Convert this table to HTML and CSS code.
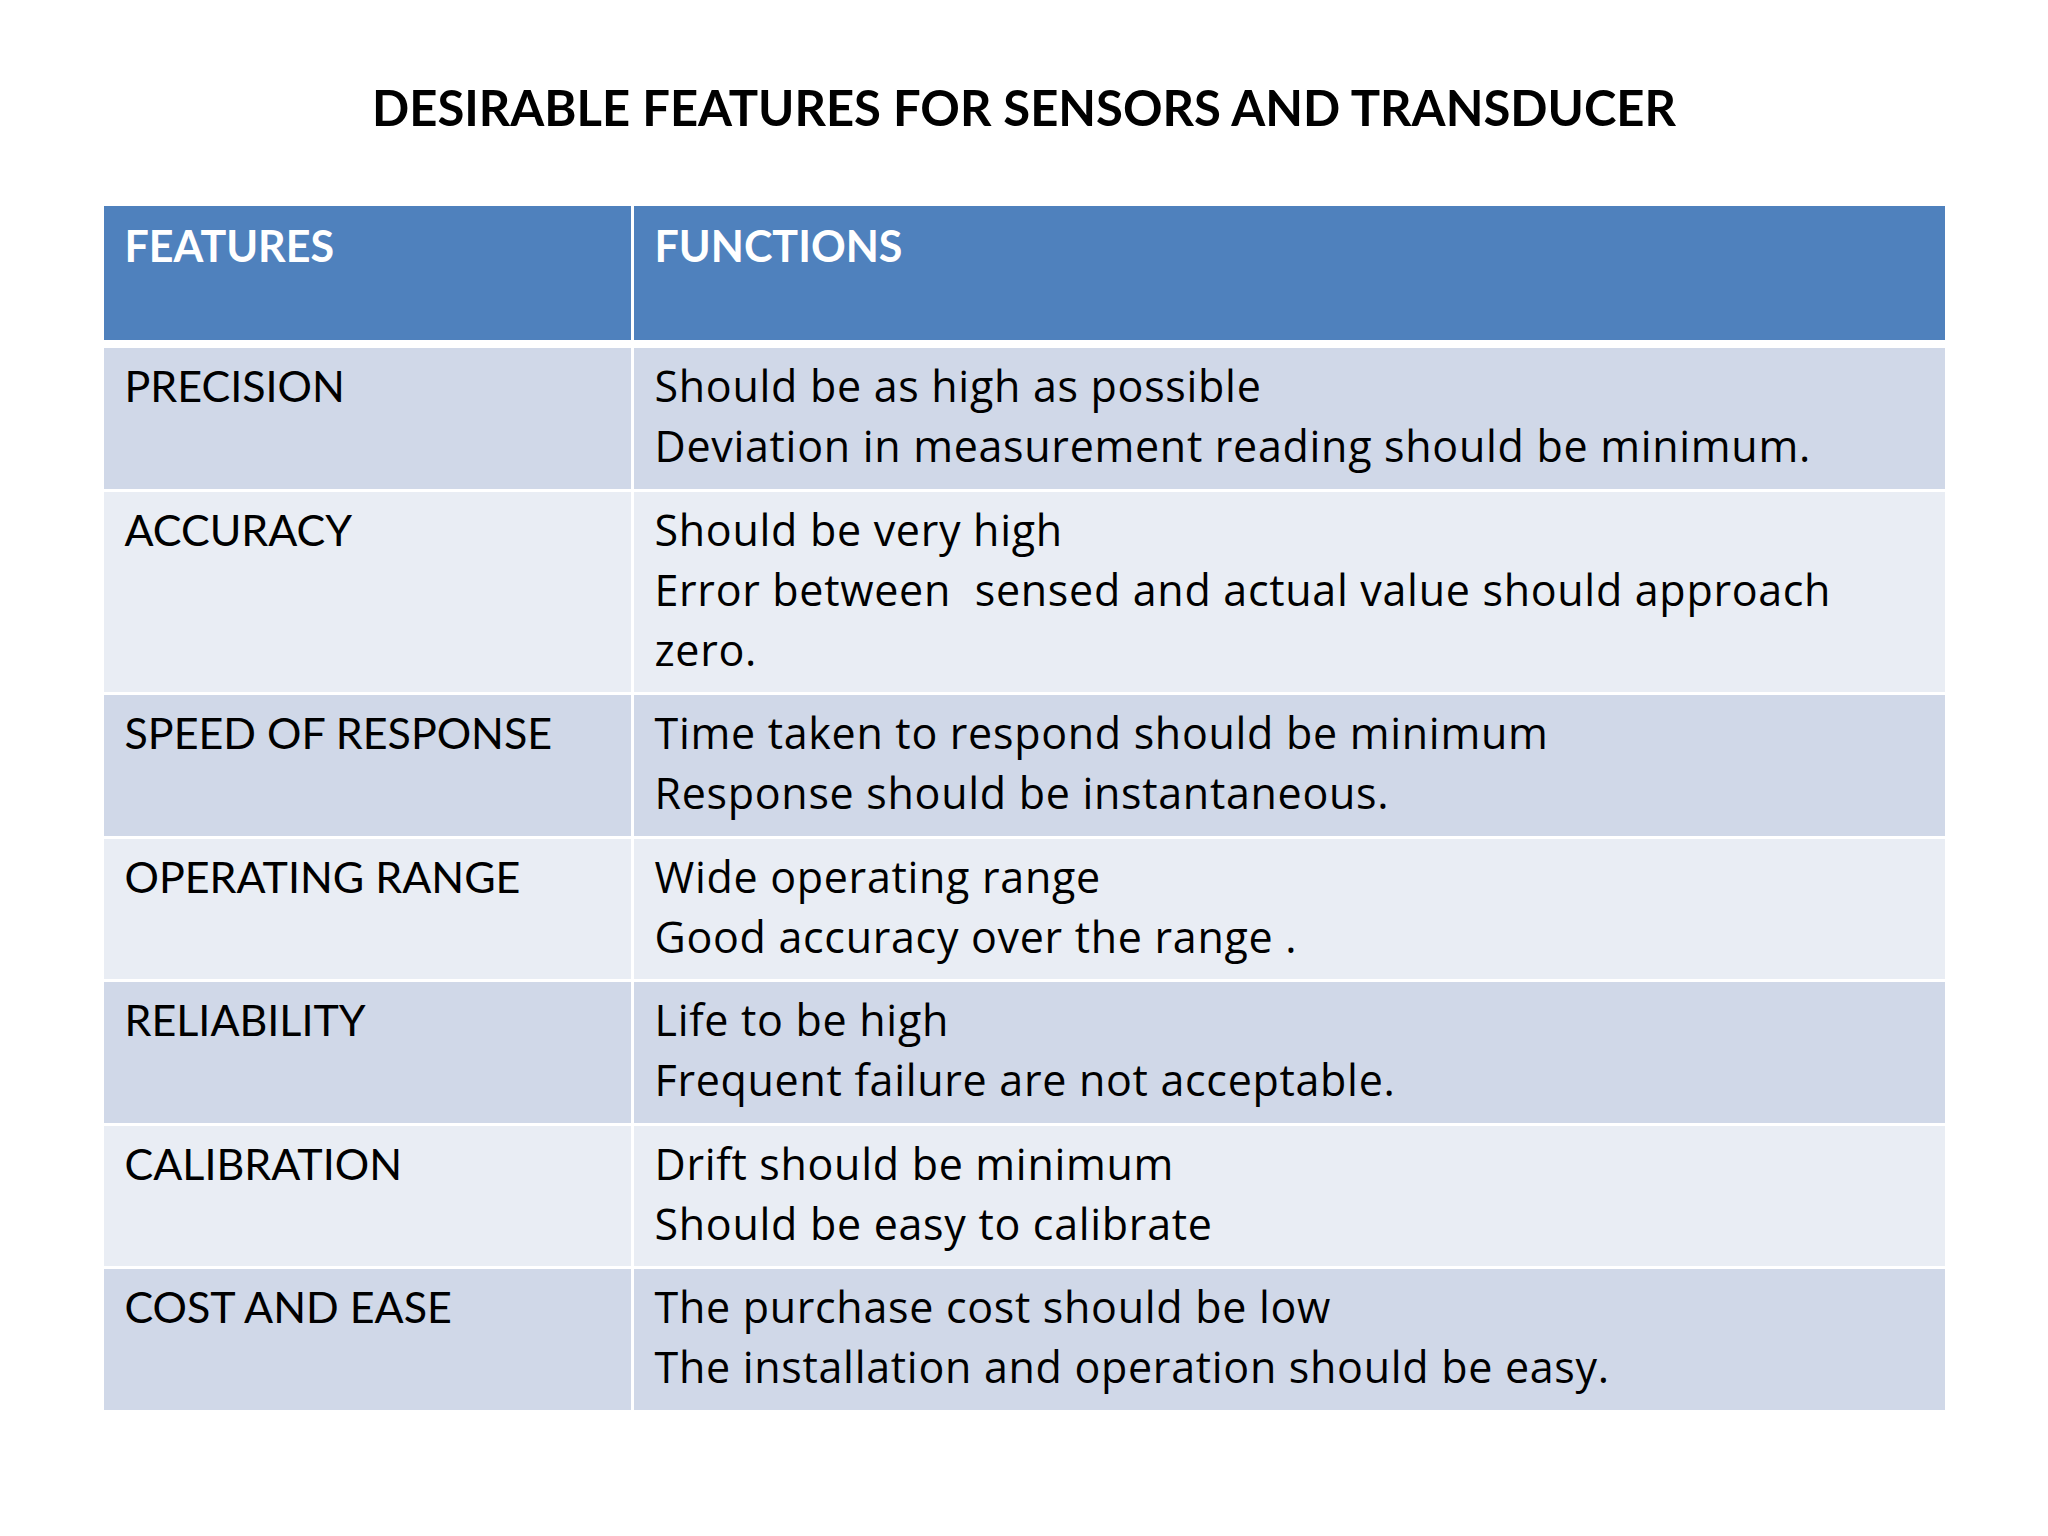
FILE: index.html
```html
<!DOCTYPE html>
<html lang="en">
<head>
<meta charset="utf-8">
<title>Desirable Features for Sensors and Transducer</title>
<link rel="stylesheet" href="styles.css">
</head>
<body>
<main class="slide">
  <h1 class="title">DESIRABLE FEATURES FOR SENSORS AND TRANSDUCER</h1>
  <div class="table">
    <div class="row head">
      <div class="cell">FEATURES</div>
      <div class="cell">FUNCTIONS</div>
    </div>
    <div class="row odd">
      <div class="cell">PRECISION</div>
      <div class="cell fn">Should be as high as possible<br>Deviation in measurement reading should be minimum.</div>
    </div>
    <div class="row even">
      <div class="cell">ACCURACY</div>
      <div class="cell fn">Should be very high<br>Error between&nbsp; sensed and actual value should approach zero.</div>
    </div>
    <div class="row odd">
      <div class="cell">SPEED OF RESPONSE</div>
      <div class="cell fn">Time taken to respond should be minimum<br>Response should be instantaneous.</div>
    </div>
    <div class="row even">
      <div class="cell">OPERATING RANGE</div>
      <div class="cell fn">Wide operating range<br>Good accuracy over the range .</div>
    </div>
    <div class="row odd">
      <div class="cell">RELIABILITY</div>
      <div class="cell fn">Life to be high<br>Frequent failure are not acceptable.</div>
    </div>
    <div class="row even">
      <div class="cell">CALIBRATION</div>
      <div class="cell fn">Drift should be minimum<br>Should be easy to calibrate</div>
    </div>
    <div class="row odd">
      <div class="cell">COST AND EASE</div>
      <div class="cell fn">The purchase cost should be low<br>The installation and operation should be easy.</div>
    </div>
  </div>
</main>
</body>
</html>
```

FILE: styles.css
```css
html, body {
  margin: 0;
  padding: 0;
  background: #ffffff;
}

body {
  font-family: "Lato", "Open Sans", sans-serif;
  color: #000000;
}

.slide {
  width: 2048px;
  height: 1536px;
  display: flex;
  flex-direction: column;
  align-items: center;
}

.title {
  margin: 77px 0 0 0;
  font-size: 49px;
  line-height: 60px;
  font-weight: 700;
  text-align: center;
}

.table {
  margin-top: 69px;
  width: 1841px;
  display: flex;
  flex-direction: column;
  gap: 3px;
}

.row {
  display: grid;
  grid-template-columns: 527px 1fr;
  column-gap: 3px;
}

.cell {
  font-size: 43px;
  line-height: 60px;
  padding: 8px 20px 12.5px 21px;
}

.fn {
  font-family: "Open Sans", "Lato", sans-serif;
  font-size: 43px;
  letter-spacing: 0.7px;
  line-height: 60px;
  padding-right: 60px;
}

.head {
  margin-bottom: 5px;
}

.head .cell {
  background: #4f81bd;
  color: #ffffff;
  font-family: "Lato", "Open Sans", sans-serif;
  font-size: 43px;
  font-weight: 700;
  letter-spacing: 0;
  height: 134px;
  box-sizing: border-box;
  padding-top: 10px;
}

.odd .cell {
  background: #d0d8e8;
}

.even .cell {
  background: #e9edf4;
}
```
